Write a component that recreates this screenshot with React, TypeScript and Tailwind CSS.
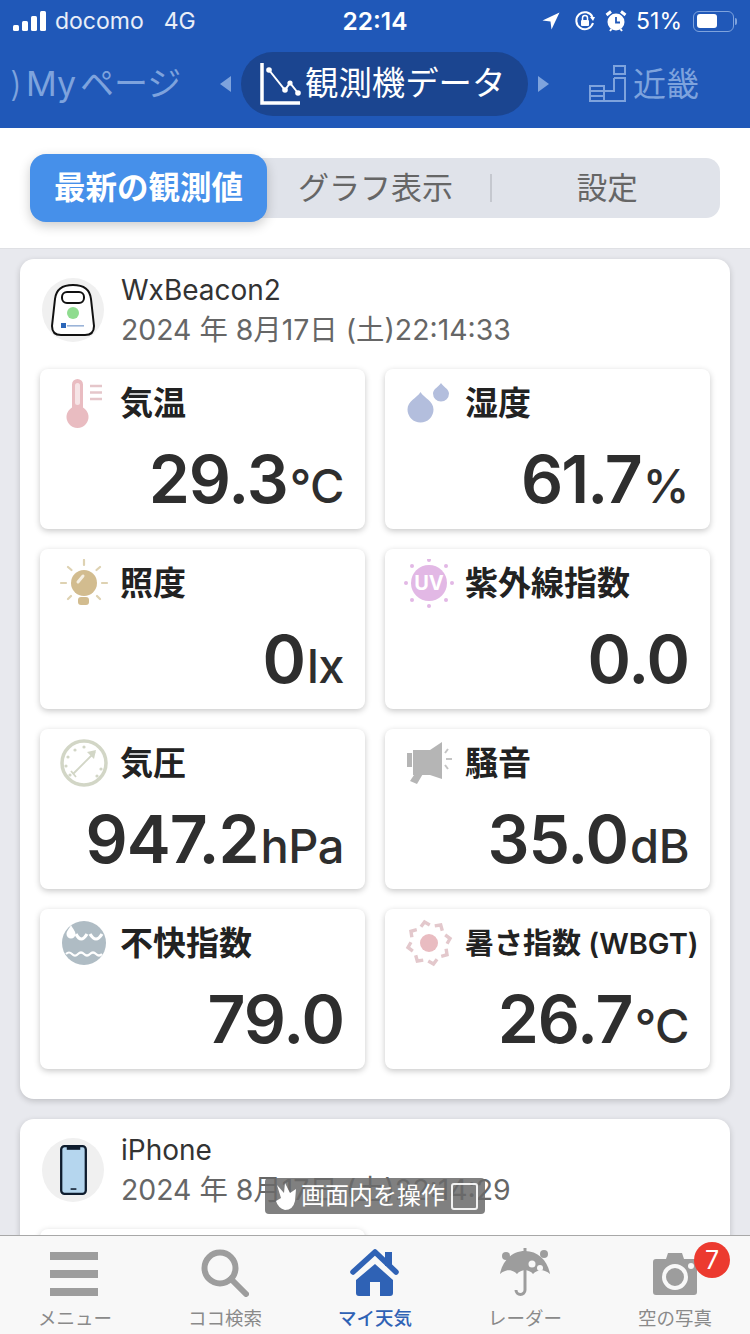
import React from "react";

const JP = "font-['Inter','Noto_Sans_CJK_JP',sans-serif]";

function Signal() {
  return (
    <svg width="34" height="20" viewBox="0 0 34 20" className="mr-[8px]">
      <rect x="0" y="14" width="6" height="6" rx="1.5" fill="#fff" />
      <rect x="9" y="10" width="6" height="10" rx="1.5" fill="#fff" />
      <rect x="18" y="5" width="6" height="15" rx="1.5" fill="#fff" />
      <rect x="27" y="0" width="6" height="20" rx="1.5" fill="#fff" />
    </svg>
  );
}

function StatusRight() {
  return (
    <div className="flex items-center">
      <svg width="18" height="18" viewBox="0 0 18 18" className="mr-[14px]">
        <path d="M17.5 0.5 L0.5 8.5 L8.5 9.5 L9.5 17.5 Z" fill="#fff" />
      </svg>
      <svg width="22" height="22" viewBox="0 0 22 22" className="mr-[9px]">
        <path d="M18.5 7 A8.5 8.5 0 1 0 19 13" fill="none" stroke="#fff" strokeWidth="2" />
        <path d="M16 7 L21 7 L19 11 Z" fill="#fff" />
        <rect x="7" y="10" width="8" height="6" rx="1" fill="#fff" />
        <path d="M8.5 10 V8 a2.5 2.5 0 0 1 5 0 V10" fill="none" stroke="#fff" strokeWidth="1.5" />
      </svg>
      <svg width="22" height="22" viewBox="0 0 22 22" className="mr-[9px]">
        <circle cx="11" cy="12" r="8.5" fill="#fff" />
        <path d="M11 7 V12.5 H15" fill="none" stroke="#2058b8" strokeWidth="1.8" />
        <path d="M1.5 5 L6 1.5 M20.5 5 L16 1.5" stroke="#fff" strokeWidth="3" />
        <path d="M5 21 L6.5 19 M17 21 L15.5 19" stroke="#fff" strokeWidth="2" />
      </svg>
      <span className="text-[23px] leading-none text-white mr-[11px]">51%</span>
      <div className="flex items-center">
        <div className="w-[41px] h-[21px] rounded-[6px] border-[1.5px] border-[#7ea3dd] p-[2.5px]">
          <div className="w-[20px] h-full rounded-[3px] bg-white" />
        </div>
        <div className="w-[2px] h-[7px] ml-[1px] rounded-r-sm bg-[#7ea3dd]" />
      </div>
    </div>
  );
}

function ChartIcon() {
  return (
    <svg width="42" height="42" viewBox="0 0 42 42" className="shrink-0">
      <path d="M2 0 V40 H40" fill="none" stroke="#fff" strokeWidth="3.5" />
      <path d="M9 7 L25 27 L30 20 L38 30" fill="none" stroke="#fff" strokeWidth="2" />
      <circle cx="9" cy="7" r="2.8" fill="#fff" />
      <circle cx="25" cy="27" r="2.8" fill="#fff" />
      <circle cx="30" cy="20" r="2.6" fill="#fff" />
      <circle cx="38" cy="30" r="2.8" fill="#fff" />
    </svg>
  );
}

function BuildingsIcon() {
  return (
    <svg width="38" height="38" viewBox="0 0 38 38" className="shrink-0">
      <g fill="none" stroke="#7ea3dd" strokeWidth="2">
        <rect x="25" y="1" width="11" height="8" />
        <path d="M25 13 H36 V36 H23" />
        <path d="M25 13 V26 H15" />
        <rect x="1" y="21" width="14" height="15" />
        <path d="M1 26 H15 M1 31 H15 M15 36 H23" />
      </g>
    </svg>
  );
}

function BeaconDevice() {
  return (
    <svg width="44" height="52" viewBox="0 0 44 52">
      <path d="M22 1 C34 1 39 6 40 15 L43 42 Q43 51 34 51 H10 Q1 51 1 42 L4 15 C5 6 10 1 22 1 Z" fill="#fff" stroke="#111" strokeWidth="2" />
      <rect x="11" y="8" width="22" height="11" rx="5" fill="#fff" stroke="#111" strokeWidth="2" />
      <circle cx="22" cy="29" r="6" fill="#8fdc8f" />
      <rect x="10" y="39" width="5" height="5" fill="#2b66b8" />
      <rect x="16" y="41" width="17" height="1.6" fill="#9bb4d8" />
    </svg>
  );
}

function PhoneDevice() {
  return (
    <svg width="27" height="50" viewBox="0 0 28 52">
      <rect x="1.2" y="1.2" width="25.6" height="49.6" rx="3.5" fill="#b5d6ee" stroke="#0f1d2e" strokeWidth="2.4" />
      <rect x="7" y="2" width="14" height="3" fill="#0f1d2e" />
      <rect x="11" y="45" width="6" height="1.6" fill="#0f1d2e" />
    </svg>
  );
}

function Thermo() {
  return (
    <svg width="50" height="50" viewBox="0 0 50 50">
      <path d="M13 5.5 a5.5 5.5 0 0 1 11 0 V28.5 a11 11 0 1 1 -11 0 Z" fill="#e9bcc1" />
      <rect x="16" y="4" width="5" height="22" rx="2.5" fill="#f6e4e6" />
      <path d="M31 7 H43 M31 13.5 H43 M31 20 H43" stroke="#e5c6ca" strokeWidth="2.4" />
    </svg>
  );
}

function Drops() {
  return (
    <svg width="50" height="50" viewBox="0 0 50 50">
      <path d="M16.5 13 C20 19 29.5 22 29.5 30.5 A13 13 0 0 1 3.5 30.5 C3.5 22 13 19 16.5 13 Z" fill="#b3bedd" />
      <path d="M37 4 C39 7.5 45 10 45 14.5 A8 8 0 0 1 29 14.5 C29 10 35 7.5 37 4 Z" fill="#b3bedd" />
    </svg>
  );
}

function Bulb() {
  return (
    <svg width="50" height="50" viewBox="0 0 50 50">
      <circle cx="25" cy="24" r="13" fill="#d2bc8f" />
      <path d="M19 23 L24 17" stroke="#f5efe2" strokeWidth="3" strokeLinecap="round" />
      <rect x="19" y="38" width="11" height="8" rx="3" fill="#d2bc8f" />
      <path d="M25 1 V6 M9 8 L12.5 11 M41 8 L37.5 11 M2 24 H7 M43 24 H48 M9 40 L12 37 M41 40 L38 37" stroke="#ded2b2" strokeWidth="2.2" strokeLinecap="round" />
    </svg>
  );
}

function UV() {
  return (
    <svg width="50" height="50" viewBox="0 0 50 50">
      <circle cx="25" cy="24" r="18" fill="#e2b8e5" />
      <text x="25" y="31" textAnchor="middle" fontSize="20" fontWeight="700" fill="#fff" fontFamily="Inter">UV</text>
      {[[25, 1], [25, 47], [2, 24], [48, 24], [8, 7], [42, 7], [8, 41], [42, 41]].map(([x, y]) => (
        <circle key={`${x}-${y}`} cx={x} cy={y} r="2" fill="#e2b8e5" />
      ))}
    </svg>
  );
}

function Gauge() {
  const dots = [[16, 11], [25, 8], [9, 18], [7, 27], [42, 30], [38, 37], [11, 36]];
  return (
    <svg width="50" height="50" viewBox="0 0 50 50">
      <circle cx="25" cy="24" r="22" fill="none" stroke="#d2d6c6" strokeWidth="3.5" />
      {dots.map(([x, y]) => (
        <circle key={`${x}-${y}`} cx={x} cy={y} r="1.6" fill="#d2d6c6" />
      ))}
      <path d="M14 35 L36 13" stroke="#d2d6c6" strokeWidth="1.8" />
      <path d="M28 13 L37 11 L35 20 Z" fill="#d2d6c6" />
      <path d="M12 32 L17 38" stroke="#d2d6c6" strokeWidth="1.8" />
    </svg>
  );
}

function Speaker() {
  return (
    <svg width="50" height="50" viewBox="0 0 50 50">
      <rect x="3" y="14" width="5" height="14" fill="#b5b5b5" />
      <path d="M9 11 H26 V36 H9 Z" fill="#b5b5b5" />
      <path d="M26 11 Q32 7 38 3 V40 Q32 38 26 36 Z" fill="#b5b5b5" />
      <path d="M12 33 H20 L13 45 L6 42 Z" fill="#b5b5b5" />
      <path d="M41 14 L44 10 M42 20 H48 M41 26 L44 30" stroke="#c4c4c4" strokeWidth="2" />
    </svg>
  );
}

function Discomfort() {
  return (
    <svg width="50" height="50" viewBox="0 0 50 50">
      <circle cx="25" cy="24" r="22" fill="#afbcc4" />
      <path d="M12 6 C14 10 16.5 12 16.5 15 A4.5 4.5 0 0 1 7.5 15 C7.5 12 10 10 12 6 Z" fill="#fff" />
      <path d="M17 15 Q22 25 28 15 M31 15 Q37 25 43 15" fill="none" stroke="#fff" strokeWidth="3.2" />
      <path d="M7 35 Q10 32 13 35 T19 35 T25 35 T31 35 T37 35 T43 35" fill="none" stroke="#fff" strokeWidth="2.2" />
    </svg>
  );
}

function HotSun() {
  const rays = [0, 45, 90, 135, 180, 225, 270, 315];
  return (
    <svg width="50" height="50" viewBox="0 0 50 50">
      <circle cx="25" cy="24" r="9" fill="#e9bcc1" />
      {rays.map((r) => (
        <path key={r} d="M20.5 6.5 L25 2.5 L29.5 6.5" transform={`rotate(${r - 12} 25 24)`} fill="none" stroke="#e3c8cc" strokeWidth="3.4" />
      ))}
    </svg>
  );
}

function Tile({ icon, label, value, unit, small, tight }: { icon: React.ReactNode; label: string; value?: string; unit?: string; small?: boolean; tight?: boolean }) {
  return (
    <div className="h-[160px] rounded-[8px] bg-white shadow-[0_2px_6px_rgba(0,0,0,0.22)] pt-[10px] pl-[19px] pr-[21px]">
      <div className="flex items-start h-[50px]">
        <div className="w-[50px] h-[50px] shrink-0">{icon}</div>
        <span className={`ml-[11px] whitespace-nowrap leading-[40px] text-[#222] font-semibold ${small ? "text-[29px] mt-[5px] -mr-[10px]" : "text-[33px] mt-[4px]"}`}>{label}</span>
      </div>
      {value && (
        <div className="flex justify-end items-baseline mt-[8px] text-[#2e2e2e] leading-[84px]">
          <span className={`text-[66px] font-semibold ${tight ? "tracking-[-2px]" : "tracking-[-1px]"}`}>{value}</span>
          {unit && <span className="text-[47px] font-medium tracking-[-0.5px] ml-[2px]">{unit}</span>}
        </div>
      )}
    </div>
  );
}

function CardHead({ icon, name, date }: { icon: React.ReactNode; name: string; date: string }) {
  return (
    <div className="flex items-start h-[110px] pl-[2px]">
      <div className="mt-[19px] w-[62px] h-[64px] rounded-[50%] bg-[#f0f0f0] flex items-center justify-center shrink-0">{icon}</div>
      <div className="ml-[17px] pt-[11px]">
        <div className="text-[28px] leading-[40px] text-[#333]">{name}</div>
        <div className="text-[28.4px] leading-[40px] text-[#666] whitespace-nowrap">{date}</div>
      </div>
    </div>
  );
}

function NavItem({ icon, label, active }: { icon: React.ReactNode; label: string; active?: boolean }) {
  return (
    <div className="relative flex flex-col items-center w-[150px]">
      <div className="h-[62px] flex items-center justify-center">{icon}</div>
      <span className={`text-[18.5px] leading-[24px] mt-[8px] ${active ? "text-[#2f62b5] font-medium" : "text-[#8a8a8a]"}`}>{label}</span>
    </div>
  );
}

export default function App() {
  return (
    <div className={`relative w-[750px] h-[1334px] overflow-hidden flex flex-col bg-[#e8e9ee] ${JP}`}>
      <header className="bg-[#2058b8] h-[128px] shrink-0">
        <div className="h-[42px] flex items-center justify-between pl-[13px] pr-[13px]">
          <div className="flex items-center w-[195px]">
            <Signal />
            <span className="text-[23px] text-white/90 leading-none">docomo</span>
            <span className="text-[23px] text-white/90 leading-none ml-[20px]">4G</span>
          </div>
          <span className="text-[24.5px] font-semibold text-white leading-none">22:14</span>
          <div className="w-[195px] flex justify-end"><StatusRight /></div>
        </div>
        <div className="flex items-center h-[64px] mt-[10px] text-[#7ea3dd] whitespace-nowrap">
          <span className="text-[34px] leading-none w-[220px] pl-[10px]">
            <span className="inline-block w-[16px] font-light">)</span>My<span className="ml-[4px]">ページ</span>
          </span>
          <div className="w-0 h-0 border-y-[8px] border-y-transparent border-r-[11px] border-r-[#7ea3dd]" />
          <div className="ml-[10px] w-[287px] h-[64px] rounded-full bg-[#1b4590] flex items-center pl-[19px] text-white">
            <ChartIcon />
            <span className="ml-[3px] text-[33.4px] leading-none">観測機データ</span>
          </div>
          <div className="ml-[10px] w-0 h-0 border-y-[8px] border-y-transparent border-l-[11px] border-l-[#7ea3dd]" />
          <div className="ml-[40px]"><BuildingsIcon /></div>
          <span className="ml-[6px] text-[33px] leading-none">近畿</span>
        </div>
      </header>

      <div className="h-[120px] bg-white shrink-0 flex items-center px-[30px]">
        <div className="relative flex items-center w-full h-[60px] rounded-[14px] bg-[#e0e3ea]">
          <div className="w-[237px] h-[68px] shrink-0 rounded-[16px] bg-[#4690ea] shadow-[0_4px_12px_rgba(0,0,0,0.2)] flex items-center justify-center text-[31.5px] font-bold text-white whitespace-nowrap">最新の観測値</div>
          <div className="w-[223px] text-center text-[31px] text-[#666] whitespace-nowrap pr-[6px]">グラフ表示</div>
          <div className="w-[1.5px] h-[28px] bg-[#c5c8cf]" />
          <div className="flex-1 text-center text-[30.5px] text-[#666] pl-[3px]">設定</div>
        </div>
      </div>

      <main className="flex-1 min-h-0 overflow-hidden border-t border-[#dfe0e4] px-[20px] pt-[10px] flex flex-col gap-[20px]">
        <section className="rounded-[14px] bg-white shadow-[0_2px_6px_rgba(0,0,0,0.18)] shrink-0 h-[840px] px-[20px]">
          <CardHead icon={<BeaconDevice />} name="WxBeacon2" date="2024 年 8月17日 (土)22:14:33" />
          <div className="grid grid-cols-2 gap-[20px]">
            <Tile icon={<Thermo />} label="気温" value="29.3" unit="°C" />
            <Tile icon={<Drops />} label="湿度" value="61.7" unit="%" tight />
            <Tile icon={<Bulb />} label="照度" value="0" unit="lx" />
            <Tile icon={<UV />} label="紫外線指数" value="0.0" />
            <Tile icon={<Gauge />} label="気圧" value="947.2" unit="hPa" />
            <Tile icon={<Speaker />} label="騒音" value="35.0" unit="dB" />
            <Tile icon={<Discomfort />} label="不快指数" value="79.0" />
            <Tile icon={<HotSun />} label="暑さ指数 (WBGT)" value="26.7" unit="°C" small />
          </div>
        </section>
        <section className="rounded-[14px] bg-white shadow-[0_2px_6px_rgba(0,0,0,0.18)] shrink-0 h-[300px] px-[20px]">
          <CardHead icon={<PhoneDevice />} name="iPhone" date="2024 年 8月17日 (土)22:14:29" />
          <div className="grid grid-cols-2 gap-[20px]">
            <Tile icon={null} label="" />
          </div>
        </section>
      </main>

      <div className="absolute left-[265px] top-[1178px] w-[220px] h-[36px] rounded-[4px] bg-[#6a6a6a]/85 flex items-center pl-[8px] text-white">
        <svg width="28" height="30" viewBox="0 0 28 30" className="shrink-0">
          <path d="M4 4 L11 12 L12 2 L17 12 L23 8 L22 20 Q20 29 12 29 Q5 27 3 20 L8 17 Z" fill="#fff" />
        </svg>
        <span className="text-[24px] leading-none whitespace-nowrap">画面内を操作</span>
        <div className="ml-[6px] w-[27px] h-[27px] rounded-[3px] border-2 border-white/90" />
      </div>

      <nav className="relative h-[99px] shrink-0 bg-[#f8f8f8] border-t border-[#a8a8a8] flex">
        <NavItem
          label="メニュー"
          icon={
            <svg width="48" height="44" viewBox="0 0 48 44" className="mt-[14px] -ml-[2px]">
              <rect x="0" y="0" width="48" height="8" fill="#9d9d9d" />
              <rect x="0" y="18" width="48" height="8" fill="#9d9d9d" />
              <rect x="0" y="36" width="48" height="8" fill="#9d9d9d" />
            </svg>
          }
        />
        <NavItem
          label="ココ検索"
          icon={
            <svg width="48" height="48" viewBox="0 0 48 48" className="mt-[12px]">
              <circle cx="19" cy="19" r="15.5" fill="none" stroke="#9d9d9d" strokeWidth="6" />
              <path d="M30 30 L45 45" stroke="#9d9d9d" strokeWidth="6" strokeLinecap="round" />
            </svg>
          }
        />
        <NavItem
          active
          label="マイ天気"
          icon={
            <svg width="52" height="48" viewBox="0 0 52 48" className="mt-[12px]">
              <path d="M4 23 L26 3 L47 23" fill="none" stroke="#2f62b5" strokeWidth="5.5" strokeLinecap="round" strokeLinejoin="round" />
              <rect x="36" y="3" width="7" height="14" fill="#2f62b5" />
              <path d="M26 15 L44 31 V44 Q44 47 41 47 H31 V33 H21 V47 H10 Q7 47 7 44 V31 Z" fill="#2f62b5" />
            </svg>
          }
        />
        <NavItem
          label="レーダー"
          icon={
            <svg width="50" height="50" viewBox="0 0 50 50" className="mt-[12px]">
              <path d="M25 3 C38 3 48 13 50 26 C44 21 38 21 33 26 C29 21 21 21 17 26 C12 21 6 21 0 26 C2 13 12 3 25 3 Z" fill="#9d9d9d" />
              <path d="M25 0 V42 a4.5 4.5 0 0 1 -9 0" fill="none" stroke="#9d9d9d" strokeWidth="3" />
              <circle cx="6" cy="8" r="4" fill="#9d9d9d" />
              <circle cx="44" cy="6" r="4" fill="#9d9d9d" />
              <circle cx="32" cy="16" r="3.5" fill="#f8f8f8" />
              <circle cx="40" cy="20" r="3" fill="#f8f8f8" />
            </svg>
          }
        />
        <NavItem
          label="空の写真"
          icon={
            <svg width="44" height="42" viewBox="0 0 44 42" className="mt-[14px]">
              <path d="M13 6 L15 0 H29 L31 6 H41 Q44 6 44 9 V39 Q44 42 41 42 H3 Q0 42 0 39 V9 Q0 6 3 6 Z" fill="#9d9d9d" />
              <circle cx="22" cy="24" r="11" fill="none" stroke="#f8f8f8" strokeWidth="4" />
              <circle cx="38" cy="13" r="3" fill="#f8f8f8" />
            </svg>
          }
        />
        <div className="absolute left-[694px] top-[6px] w-[36px] h-[36px] rounded-full bg-[#ec3a2f] flex items-center justify-center text-white text-[25px] leading-none">7</div>
      </nav>
    </div>
  );
}
